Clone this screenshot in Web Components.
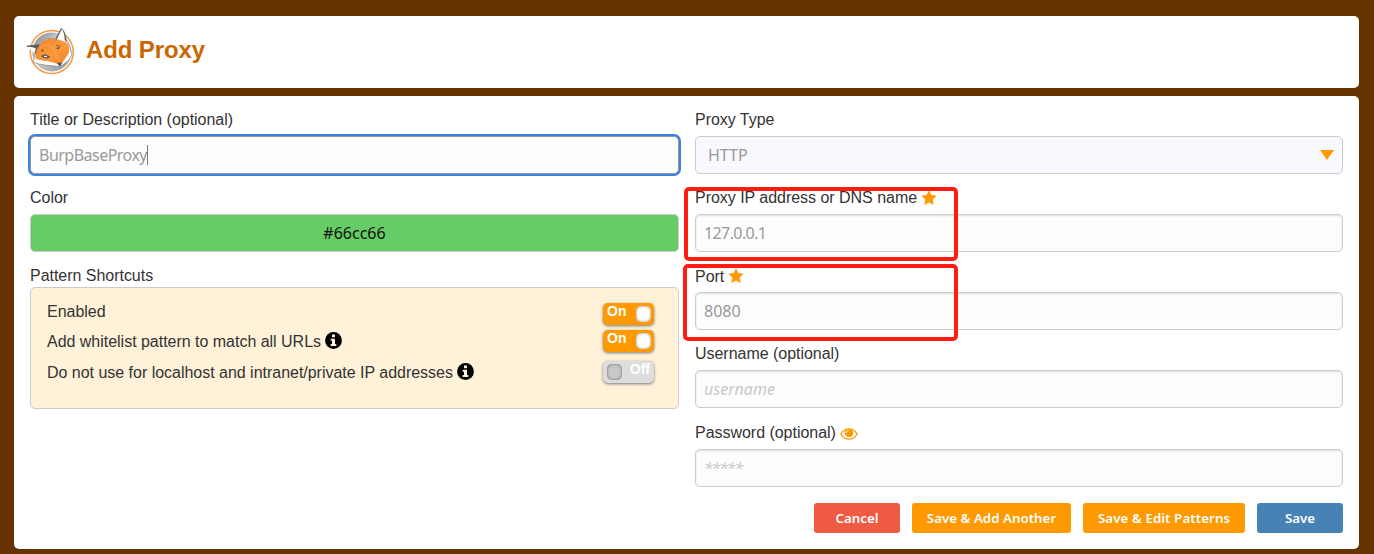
<!DOCTYPE html>
<html lang="en">
<head>
<meta charset="utf-8">
<title>Add Proxy</title>
<style>
html,body{margin:0;height:100%;background:#630;overflow:hidden}
body{font:16px/18px "Liberation Sans",Arial,sans-serif;color:#333}
</style>
</head>
<body>
<proxy-page></proxy-page>
<script>
const define=(name,html)=>{
  const t=document.createElement('template');
  t.innerHTML=html;
  customElements.define(name,class extends HTMLElement{
    constructor(){super();this.attachShadow({mode:'open'}).append(t.content.cloneNode(true));}
  });
};

define('fox-logo',`<style>:host{display:block;width:50px;height:48px}svg{display:block}</style>
<svg width="50" height="48" viewBox="0 0 50 48">
<defs><linearGradient id="g" x1="0" y1="0" x2="1" y2="1"><stop offset="0" stop-color="#77797b"/><stop offset=".4" stop-color="#cfd0d1"/><stop offset="1" stop-color="#8d9093"/></linearGradient>
<linearGradient id="o" x1="0" y1="0" x2="1" y2="1"><stop offset="0" stop-color="#f0842a"/><stop offset=".55" stop-color="#fb983a"/><stop offset="1" stop-color="#ee8228"/></linearGradient></defs>
<circle cx="25.800" cy="25" r="21.500" fill="#fff" stroke="#f79843" stroke-width="1.500"/>
<circle cx="25.800" cy="25" r="19.500" fill="url(#g)"/>
<path d="M.8 19.300 12.500 18C17 12.500 23 10.500 30 12L35.500 1.300Q40 5 40.300 14.500C43 17 44.500 21 45.800 27.500 44 33 39 37 33.500 39.500 25 38.500 14 38.500 7 35 9 32 8 28 8.500 26.500 4 24 .8 19.300Z" fill="#fff" stroke="#808080" stroke-width=".7" stroke-linejoin="round"/>
<path d="M12.500 18.500C17 12.500 23 10.800 30 12L40 15C43 19 44.500 23 42 27.500 39 31 37.500 35 34 38.500 29 34.500 21 35 10 32 8.500 27 9.500 22 12.500 18.500Z" fill="url(#o)"/>
<path d="M1 19.300 12.800 18Q10 22 9 26.500M30 12.300 35.500 1.500" fill="none" stroke="#5c5c5c" stroke-width="1.200"/>
<path d="M2 20Q8 18 12.800 18.300L10.500 22Q8 19.500 2 20ZM35.500 1.500Q40.300 6 40.300 14.500L38.700 13Q38.700 6 35.500 1.500Z" fill="#5c5c5c"/>
<path d="m15 29 4-2 5.500 3-3 1.500-4-.5ZM29.500 22l2-1 3-4-1.500 5ZM31 36l5.300-.5-2.300 4.200Z" fill="#555"/>
<path d="m18 29.300 3 .4" stroke="#fff" stroke-width="1.300"/>
<circle cx="16.500" cy="23.500" r="1" fill="#774016"/><circle cx="31" cy="18.500" r=".8" fill="#774016"/>
<path d="M14 21Q23 13 28 24 31 29 33 34" stroke="#ffb066" stroke-width="1.300" fill="none" opacity=".5"/>
</svg>`);

define('page-header',`<style>:host{display:flex;box-sizing:border-box;height:72px;padding:11px 12px;background:#fff;border-radius:5px}
h1{margin:14px 0 0 10px;font:bold 24px/18px "Liberation Sans",Arial,sans-serif;letter-spacing:-.12px;color:#c60;white-space:nowrap}</style><fox-logo></fox-logo><h1><slot></slot></h1>`);

define('form-field',`<style>:host{display:block}.label{display:flex;align-items:center;height:18px;margin-bottom:7px;gap:4px;letter-spacing:-.03px;white-space:nowrap}</style><div class="label"><slot name="label"></slot><slot name="icon"></slot></div><slot></slot>`);

define('text-box',`<style>:host{display:flex;align-items:center;box-sizing:border-box;height:38px;padding:0 8px;border:1px solid #ccc;border-radius:5px;background:#fdfdfd;box-shadow:inset 0 1px 2px #ddd;font:16px/22px "Noto Sans",sans-serif;color:#999}
:host([focused]){border-color:#999;box-shadow:0 0 0 2px #3584e4;letter-spacing:-.52px}
:host([focused])::after{content:"";width:1px;height:20px;background:#777}
:host([address]){letter-spacing:-.6px}
:host([hint]){font-style:italic;color:#c8c8c8}
:host([secret]){letter-spacing:-1.2px}
:host([color]){justify-content:center;background:#6c6;color:#111;box-shadow:none}
:host([select]){padding:0 8px 0 12px;background:#f8f8ff;box-shadow:none}
svg{display:none;margin-left:auto}:host([select]) svg{display:block}</style><slot></slot><svg width="14" height="10"><path d="M0 0h14L7 10z" fill="#f90"/></svg>`);

define('star-icon',`<style>:host{display:block}svg{display:block}</style><svg width="16" height="16" viewBox="0 0 16 16"><path d="m8 .3 2.300 4.800 5.300.7-3.900 3.700 1 5.400L8 12.400l-4.700 2.500 1-5.400L.4 5.800l5.300-.7z" fill="#f90"/></svg>`);
define('info-icon',`<style>:host{display:block;margin-top:-3px}svg{display:block}</style><svg width="17" height="17" viewBox="0 0 17 17"><circle cx="8.500" cy="8.500" r="8.400" fill="#000"/><path d="M7 2.500h3v2.700H7zM5.700 6.700H10v5.300h1.300v2H5.700v-2H7V8.700H5.700z" fill="#fff2d9"/></svg>`);
define('eye-icon',`<style>:host{display:block;margin-top:1px}svg{display:block}</style><svg width="18" height="12" viewBox="0 0 18 12"><path d="M.8 6Q4 .8 9 .8T17.200 6Q14 11.200 9 11.200T.8 6Z" fill="#fff" stroke="#f90" stroke-width="1.300"/><circle cx="9" cy="5" r="4.100" fill="#f90"/><path d="M6.500 5Q6.500 2.700 8.800 2.500" fill="none" stroke="#fff" stroke-width=".9"/></svg>`);

define('toggle-switch',`<style>:host{display:flex;box-sizing:border-box;width:51px;height:22px;padding:3px 3px 0 4px;border-radius:5px;background:#f90;box-shadow:0 1px 3px #777;justify-content:space-between;color:#fff;font:bold 14px/16px "Liberation Sans",Arial,sans-serif}
span{margin-top:-3px}i{width:15px;height:16px;border-radius:5px;background:#fff;box-shadow:inset 0 0 3px #888}
:host([off]){background:#ddd;flex-direction:row-reverse}:host([off]) i{background:#c8c8c8;box-shadow:inset 0 0 3px #666}:host([off]) span{margin-right:1px}</style><span><slot></slot></span><i></i>`);

define('pattern-row',`<style>:host{display:flex;justify-content:space-between;align-items:flex-start;height:30px}div{display:flex;align-items:center;gap:4px;height:18px;letter-spacing:-.02px;white-space:nowrap}</style><div><slot></slot><slot name="icon"></slot></div><slot name="switch"></slot>`);
define('pattern-box',`<style>:host{display:block;box-sizing:border-box;height:122px;margin-top:-5px;padding:15px 24px 0 16px;background:#fff2d9;border:1px solid #ccc;border-radius:5px}</style><slot></slot>`);

define('action-button',`<style>:host{display:flex;align-items:center;justify-content:center;box-sizing:border-box;width:86px;height:30px;border-radius:3px;background:#f90;color:#fff;font:600 13.33px/18px "Noto Sans",sans-serif;white-space:nowrap}
:host([kind=cancel]){background:#ef5a42}:host([kind=save]){background:#4682b4}:host([kind=another]){width:159px}:host([kind=edit]){width:162px;letter-spacing:.06px}</style><slot></slot>`);

define('red-mark',`<style>:host{position:absolute;box-sizing:border-box;border:4px solid #ff1d12;border-radius:5px;pointer-events:none}</style>`);

define('proxy-page',`<style>:host{display:flex;flex-direction:column;gap:8px;position:relative;box-sizing:border-box;height:554px;padding:16px 15px 5px 14px}
main{flex:1;box-sizing:border-box;padding:15px 16px 16px;background:#fff;border-radius:5px}
.cols{display:grid;grid-template-columns:649px 648px;gap:16px}
.col{display:flex;flex-direction:column;gap:15px}
.last{margin-top:1px}
.port{position:relative;top:1px}
footer{display:flex;justify-content:flex-end;gap:12px;margin-top:16px}
.one{left:683.5px;top:186.500px;width:274px;height:74px}.two{left:682.5px;top:263.500px;width:275px;height:77px}
.s2{margin-top:-3px}.s3{margin-top:-3px}.r3{margin-top:1px}
</style>
<page-header>Add Proxy</page-header>
<main><div class="cols">
<div class="col">
<form-field><span slot="label">Title or Description (optional)</span><text-box focused>BurpBaseProxy</text-box></form-field>
<form-field><span slot="label">Color</span><text-box color>#66cc66</text-box></form-field>
<form-field><span slot="label">Pattern Shortcuts</span><pattern-box>
<pattern-row>Enabled<toggle-switch slot="switch">On</toggle-switch></pattern-row>
<pattern-row>Add whitelist pattern to match all URLs<info-icon slot="icon"></info-icon><toggle-switch class="s2" slot="switch">On</toggle-switch></pattern-row>
<pattern-row class="r3">Do not use for localhost and intranet/private IP addresses<info-icon slot="icon"></info-icon><toggle-switch class="s3" slot="switch" off>Off</toggle-switch></pattern-row>
</pattern-box></form-field>
</div>
<div class="col">
<form-field><span slot="label">Proxy Type</span><text-box select>HTTP</text-box></form-field>
<form-field><span slot="label">Proxy IP address or DNS name</span><star-icon slot="icon"></star-icon><text-box address>127.0.0.1</text-box></form-field>
<form-field><span class="port" slot="label">Port</span><star-icon slot="icon"></star-icon><text-box>8080</text-box></form-field>
<form-field><span slot="label">Username (optional)</span><text-box hint>username</text-box></form-field>
<form-field class="last"><span slot="label">Password (optional)</span><eye-icon slot="icon"></eye-icon><text-box hint secret>*****</text-box></form-field>
</div></div>
<footer><action-button kind="cancel">Cancel</action-button><action-button kind="another">Save &amp; Add Another</action-button><action-button kind="edit">Save &amp; Edit Patterns</action-button><action-button kind="save">Save</action-button></footer>
</main>
<red-mark class="one"></red-mark><red-mark class="two"></red-mark>`);
</script>
</body>
</html>
